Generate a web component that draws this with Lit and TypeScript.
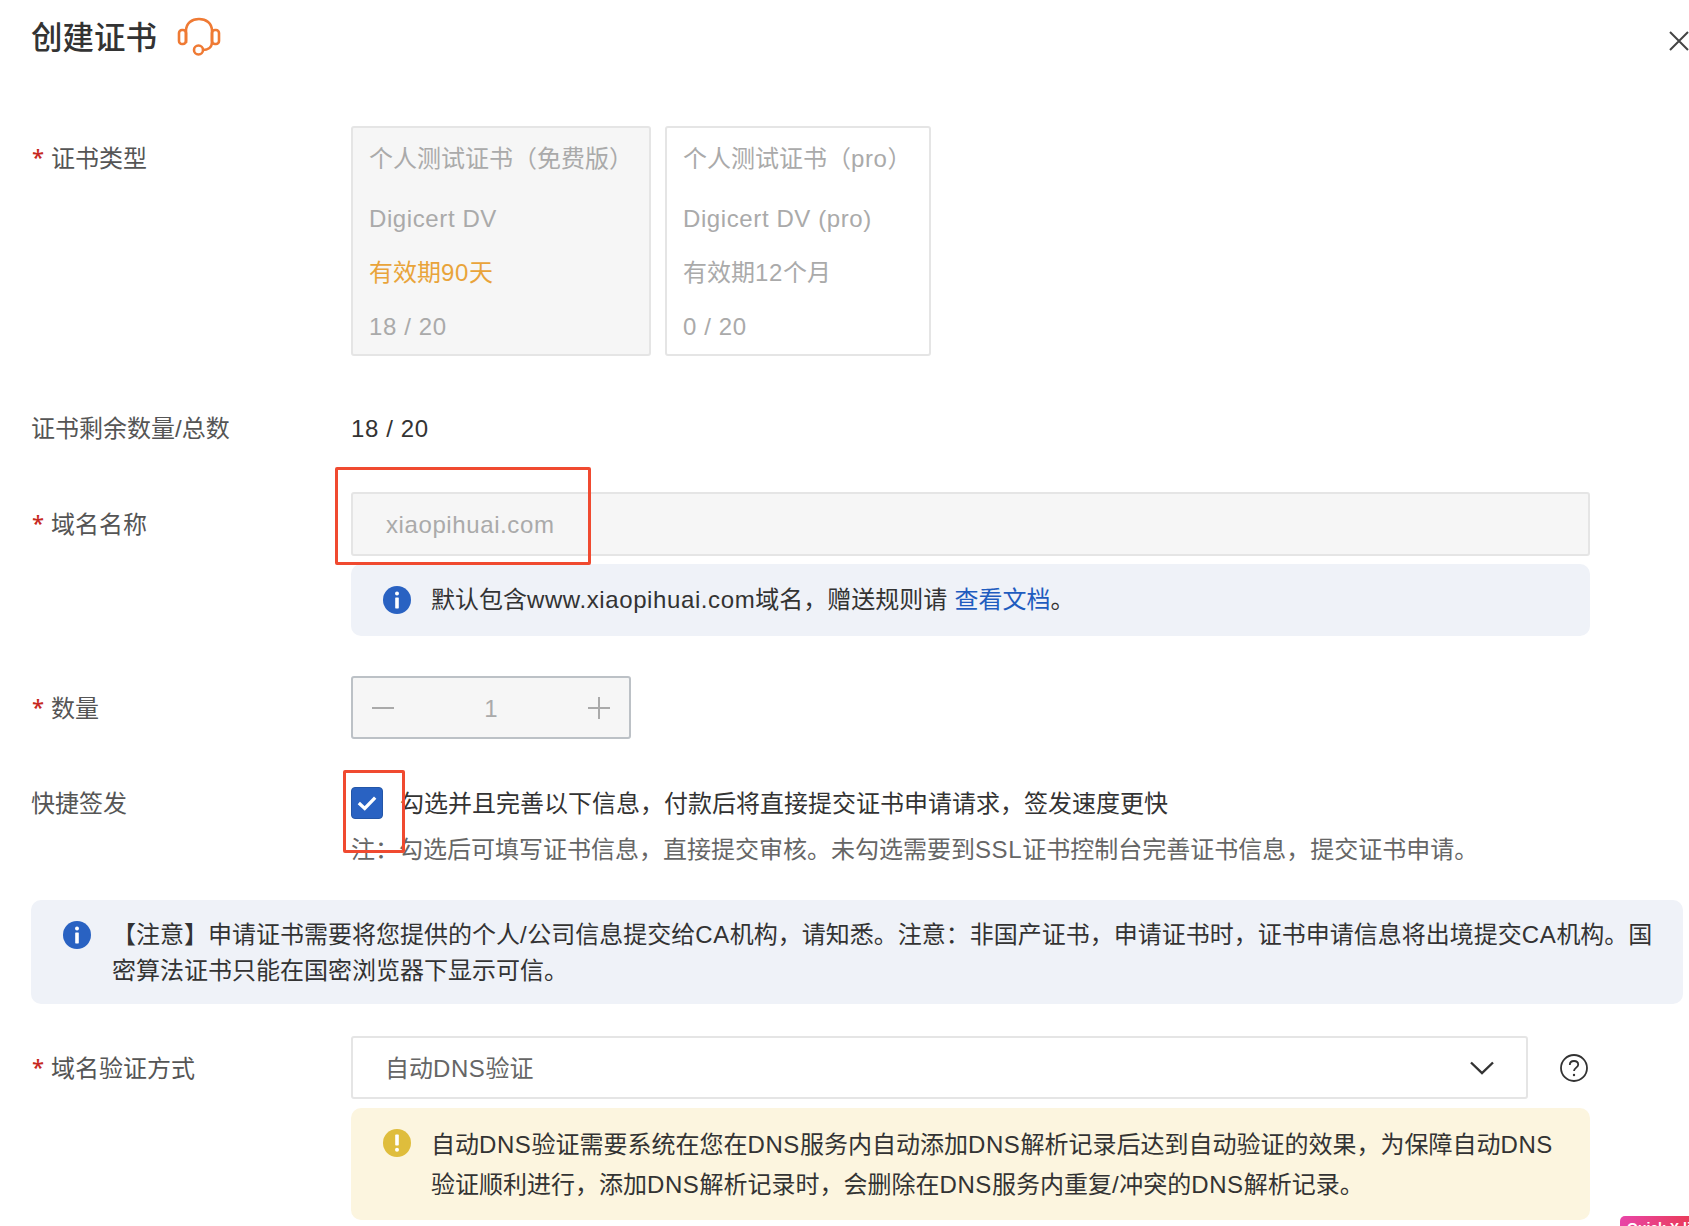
import { LitElement, html, css } from "lit";
import { customElement } from "lit/decorators.js";

const infoIcon = html`<svg class="ic" viewBox="0 0 28 28"><circle cx="14" cy="14" r="14" fill="#2962c2"/><circle cx="14" cy="7.6" r="2" fill="#fff"/><rect x="12.2" y="11.4" width="3.6" height="11" rx=".6" fill="#fff"/></svg>`;
const warnIcon = html`<svg class="ic" viewBox="0 0 28 28"><circle cx="14" cy="14" r="14" fill="#dfbd3c"/><rect x="12.2" y="5.6" width="3.6" height="11" rx=".8" fill="#fff"/><circle cx="14" cy="20.8" r="2" fill="#fff"/></svg>`;

/* Latin runs carry a little tracking; CJK runs stay on the 24px grid. */
const t = (s: string) =>
  s.split(/([\x20-\x7e]+)/).map((p, i) => (i % 2 ? html`<span class="lat">${p}</span>` : p));

@customElement("app-root")
export class AppRoot extends LitElement {
  static styles = css`
    :host { display: block; height: 1226px; overflow: hidden; position: relative; background: #fff;
      font-family: "Liberation Sans", "Noto Sans CJK SC", sans-serif; font-size: 24px; color: #333; line-height: 36px; }
    .lat { letter-spacing: .6px; }
    .page { padding-left: 31px; display: flex; flex-direction: column; }
    .head { height: 74px; display: flex; align-items: center; position: relative; }
    .title { font-size: 31.5px; font-weight: 500; color: #333; line-height: 40px; position: relative; top: 1px; }
    .headset { width: 44px; height: 40px; margin-left: 20px; }
    .close { position: absolute; left: 1638px; top: 31px; width: 20px; height: 20px; }
    .row { display: flex; width: 1559px; }
    .label { width: 320px; flex: none; color: #555; padding-left: 20px; position: relative; box-sizing: border-box; }
    .label.plain { padding-left: 0; }
    .req::before { content: "*"; position: absolute; left: 1px; top: 12px; color: #c7291f; font-family: "Noto Sans", sans-serif; font-weight: 500; font-size: 22px; }
    .content { flex: 1; min-width: 0; position: relative; }
    .r1 { margin-top: 52px; }
    .r1 .label { padding-top: 15px; }
    .cards { display: flex; gap: 14px; }
    .card { box-sizing: border-box; height: 230px; border: 2px solid #e5e5e5; border-radius: 3px; padding: 13px 16px 0; color: #aaa; display: flex; flex-direction: column; }
    .card.c1 { width: 300px; background: #f6f6f6; }
    .card.c2 { width: 266px; }
    .card div { height: 36px; white-space: nowrap; }
    .card .l2 { margin-top: 24px; }
    .card .l3 { margin-top: 18px; }
    .card .l4 { margin-top: 18px; }
    .orange { color: #e9a43a; }
    .r2 { margin-top: 55px; }
    .r3 { margin-top: 45px; }
    .r3 .label { padding-top: 15px; }
    .input { box-sizing: border-box; width: 1239px; height: 64px; border: 2px solid #e5e5e5; border-radius: 3px; background: #f6f6f6; color: #aaa; display: flex; align-items: center; padding-left: 33px; }
    .input span { padding-top: 2px; }
    .redbox { position: absolute; border: 3px solid #f04a30; border-radius: 2px; box-sizing: border-box; pointer-events: none; }
    .rb1 { left: -16px; top: -25px; width: 256px; height: 98px; }
    .rb2 { left: -8px; top: -16px; width: 62px; height: 83px; }
    .alert { display: flex; border-radius: 10px; box-sizing: border-box; }
    .ic { width: 28px; height: 28px; flex: none; }
    .a1 { width: 1239px; height: 72px; margin-top: 8px; background: #eff2f8; align-items: center; padding-left: 32px; gap: 20px; }
    .link { color: #1f5cbf; }
    .r4 { margin-top: 40px; }
    .r4 .label { padding-top: 15px; }
    .stepper { box-sizing: border-box; width: 280px; height: 63px; border: 2px solid #bcc1c6; border-radius: 3px; background: #f6f6f6; color: #aaa; display: flex; align-items: center; justify-content: space-between; padding: 0 19px; }
    .stepper span { padding-top: 2px; }
    .stepper svg { width: 22px; height: 22px; }
    .r5 { margin-top: 47px; }
    .checkline { display: flex; align-items: center; height: 36px; }
    .check { width: 32px; height: 32px; border-radius: 4px; background: #2962c2; border: 1px solid #2356a8; box-sizing: border-box; flex: none; display: flex; align-items: center; justify-content: center; position: relative; top: -1px; }
    .check svg { width: 20px; height: 20px; }
    .checktext { margin-left: 17px; white-space: nowrap; }
    .note { color: #666; margin-top: 10px; white-space: nowrap; }
    .notice { width: 1652px; height: 104px; margin-top: 32px; background: #eff2f8; padding: 17px 20px 0 32px; gap: 21px; }
    .notice .ic { margin-top: 4px; }
    .notice p { margin: 0; line-height: 36px; flex: 1; }
    .r6 { margin-top: 32px; }
    .r6 .label { padding-top: 15px; }
    .selectline { display: flex; align-items: center; }
    .select { box-sizing: border-box; width: 1177px; height: 63px; border: 2px solid #e5e5e5; border-radius: 3px; display: flex; align-items: center; justify-content: space-between; padding: 0 32px; color: #666; }
    .select span.val { padding-top: 2px; }
    .select svg { width: 24px; height: 14px; }
    .help { width: 28px; height: 28px; margin-left: 32px; }
    .a2 { width: 1239px; height: 112px; margin-top: 9px; background: #fcf5df; padding: 17px 30px 0 32px; gap: 20px; }
    .a2 .ic { margin-top: 4px; }
    .a2 p { margin: 0; line-height: 40px; flex: 1; }
    .badge { position: absolute; left: 1620px; top: 1216px; width: 80px; height: 20px; border-radius: 5px 0 0 0; background: linear-gradient(90deg, #e845a8, #ea3a4e); color: #fff; font-size: 14px; font-weight: 700; line-height: 20px; padding: 2px 0 0 7px; box-sizing: border-box; white-space: nowrap; overflow: hidden; }
  `;

  render() {
    return html`
      <div class="page">
        <div class="head">
          <span class="title">创建证书</span>
          <svg class="headset" viewBox="0 0 44 40" fill="none" stroke="#ef7a34" stroke-width="2.6">
            <path d="M9 26 V14 C9 6 15 2 22 2 C29 2 35 6 35 14 V25 C35 31 30 33 26 33"/>
            <rect x="2" y="13" width="7" height="14" rx="3"/>
            <rect x="35" y="13" width="7" height="14" rx="3"/>
            <circle cx="21.5" cy="33" r="4.5"/>
          </svg>
          <svg class="close" viewBox="0 0 20 20" stroke="#444" stroke-width="2"><path d="M1 1 L19 19 M19 1 L1 19"/></svg>
        </div>

        <div class="row r1">
          <div class="label req">证书类型</div>
          <div class="content cards">
            <div class="card c1">
              <div>个人测试证书（免费版）</div>
              <div class="l2">${t("Digicert DV")}</div>
              <div class="l3 orange">${t("有效期90天")}</div>
              <div class="l4">${t("18 / 20")}</div>
            </div>
            <div class="card c2">
              <div>${t("个人测试证书（pro）")}</div>
              <div class="l2">${t("Digicert DV (pro)")}</div>
              <div class="l3">${t("有效期12个月")}</div>
              <div class="l4">${t("0 / 20")}</div>
            </div>
          </div>
        </div>

        <div class="row r2">
          <div class="label plain">证书剩余数量/总数</div>
          <div class="content">${t("18 / 20")}</div>
        </div>

        <div class="row r3">
          <div class="label req">域名名称</div>
          <div class="content">
            <div class="input"><span class="lat">xiaopihuai.com</span></div>
            <div class="redbox rb1"></div>
            <div class="alert a1">${infoIcon}<span>${t("默认包含www.xiaopihuai.com域名，赠送规则请 ")}<span class="link">查看文档</span>。</span></div>
          </div>
        </div>

        <div class="row r4">
          <div class="label req">数量</div>
          <div class="content">
            <div class="stepper">
              <svg viewBox="0 0 22 22" stroke="#aaa" stroke-width="2"><path d="M0 11 H22"/></svg>
              <span>1</span>
              <svg viewBox="0 0 22 22" stroke="#aaa" stroke-width="2"><path d="M0 11 H22 M11 0 V22"/></svg>
            </div>
          </div>
        </div>

        <div class="row r5">
          <div class="label plain">快捷签发</div>
          <div class="content">
            <div class="checkline">
              <span class="check"><svg viewBox="0 0 22 22" fill="none" stroke="#fff" stroke-width="3.600"><path d="M2 11 L8.500 17 L20 5"/></svg></span>
              <span class="checktext">勾选并且完善以下信息，付款后将直接提交证书申请请求，签发速度更快</span>
            </div>
            <div class="note">${t("注：勾选后可填写证书信息，直接提交审核。未勾选需要到SSL证书控制台完善证书信息，提交证书申请。")}</div>
            <div class="redbox rb2"></div>
          </div>
        </div>

        <div class="alert notice">
          ${infoIcon}
          <p>${t("【注意】申请证书需要将您提供的个人/公司信息提交给CA机构，请知悉。注意：非国产证书，申请证书时，证书申请信息将出境提交CA机构。国密算法证书只能在国密浏览器下显示可信。")}</p>
        </div>

        <div class="row r6">
          <div class="label req">域名验证方式</div>
          <div class="content">
            <div class="selectline">
              <div class="select"><span class="val">${t("自动DNS验证")}</span>
                <svg viewBox="0 0 24 14" fill="none" stroke="#333" stroke-width="2.400"><path d="M1 1.500 L12 12 L23 1.500"/></svg>
              </div>
              <svg class="help" viewBox="0 0 28 28" fill="none" stroke="#333" stroke-width="1.800">
                <circle cx="14" cy="14" r="13"/>
                <path d="M9.800 11 C9.800 8.500 11.700 7 14 7 C16.400 7 18.200 8.500 18.200 10.700 C18.200 13.500 14 13.800 14 17"/>
                <circle cx="14" cy="21" r="1.200" fill="#333" stroke="none"/>
              </svg>
            </div>
            <div class="alert a2">${warnIcon}<p>${t("自动DNS验证需要系统在您在DNS服务内自动添加DNS解析记录后达到自动验证的效果，为保障自动DNS验证顺利进行，添加DNS解析记录时，会删除在DNS服务内重复/冲突的DNS解析记录。")}</p></div>
          </div>
        </div>
      </div>
      <div class="badge">Quick X lite</div>
    `;
  }
}
